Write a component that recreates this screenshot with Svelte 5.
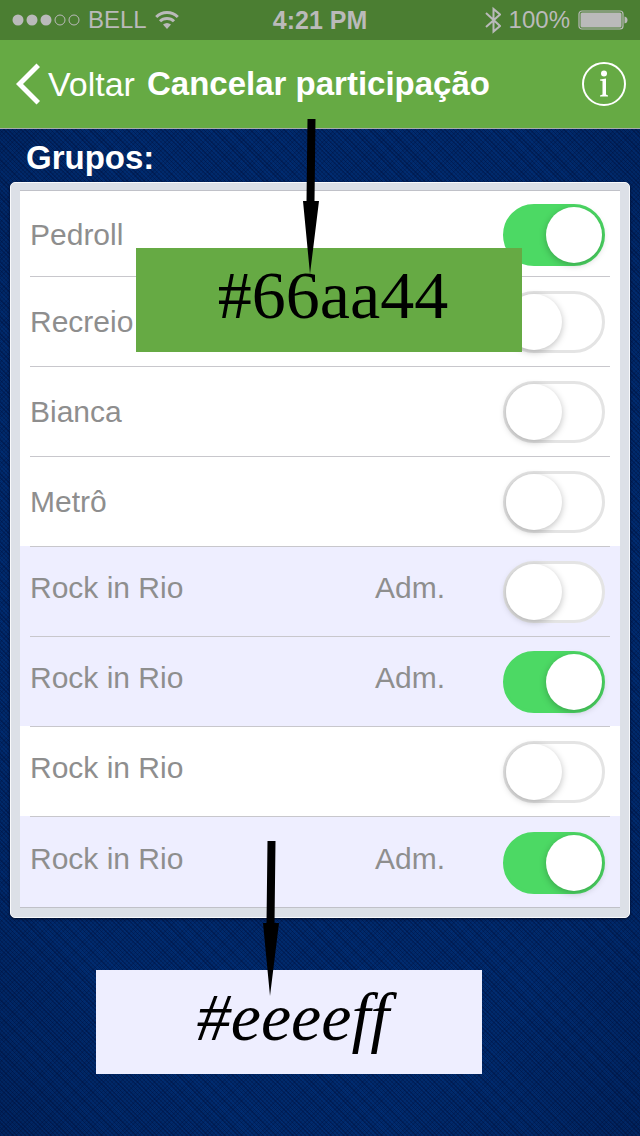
<script>
  let groups = $state([
    { name: 'Pedroll', admin: false, active: true },
    { name: 'Recreio', admin: false, active: false },
    { name: 'Bianca', admin: false, active: false },
    { name: 'Metrô', admin: false, active: false },
    { name: 'Rock in Rio', admin: true, active: false },
    { name: 'Rock in Rio', admin: true, active: true },
    { name: 'Rock in Rio', admin: false, active: false },
    { name: 'Rock in Rio', admin: true, active: true }
  ]);
</script>

{#snippet arrow()}
  <svg class="arrow" viewBox="0 0 18 156" width="18" height="156" aria-hidden="true">
    <path d="M5.500 0H13.500L12.500 82H17L8 155L1 82H4.500Z" fill="#000" />
  </svg>
{/snippet}

<div class="screen">
  <div class="status">
    <div class="side">
      <svg width="68" height="12" viewBox="0 0 68 12" aria-hidden="true">
        <g fill="#bababa">
          <circle cx="6" cy="6" r="5.5" /><circle cx="20" cy="6" r="5.5" /><circle cx="34" cy="6" r="5.5" />
        </g>
        <g fill="none" stroke="#bababa"><circle cx="48" cy="6" r="5" /><circle cx="62" cy="6" r="5" /></g>
      </svg>
      <span>BELL</span>
      <svg width="24" height="18" viewBox="0 0 24 18" aria-hidden="true">
        <path d="M1.200 6A15.500 15.500 0 0 1 22.800 6M5 10.300A10 10 0 0 1 19 10.300" fill="none" stroke="#bababa" stroke-width="3" />
        <path d="M8 13.500Q12 10.500 16 13.500L12 18Z" fill="#bababa" />
      </svg>
    </div>
    <time>4:21 PM</time>
    <div class="side end">
      <svg width="16" height="28" viewBox="0 0 16 28" aria-hidden="true">
        <path d="M1 7L15 20L8.500 25.500V3L15 8.500L1 21" fill="none" stroke="#bababa" stroke-width="2" />
      </svg>
      <span>100%</span>
      <svg width="50" height="20" viewBox="0 0 50 20" aria-hidden="true">
        <rect x="1" y="1" width="44" height="18" rx="3" fill="none" stroke="#bababa" stroke-width="1.2" />
        <rect x="2.500" y="2.500" width="41" height="15" rx="1.500" fill="#bababa" />
        <path d="M46.500 6.500Q49.500 7 49.500 10T46.500 13.500Z" fill="#bababa" />
      </svg>
    </div>
  </div>

  <header>
    <button class="back" type="button">
      <svg width="26" height="42" viewBox="0 0 26 42" aria-hidden="true">
        <path d="M22.500 0.500L26 4L9 21L26 38L22.500 41.500L2 21Z" fill="#fff" />
      </svg>
      Voltar
    </button>
    <h1>Cancelar participação</h1>
    <button class="info" type="button" aria-label="Info">
      <svg width="44" height="44" viewBox="0 0 44 44" aria-hidden="true">
        <circle cx="22" cy="22" r="21" fill="none" stroke="#fff" stroke-width="2" />
        <circle cx="22" cy="11.500" r="3" fill="#fff" />
        <path d="M18 17.500L24 16.500V32.500L26 33.500V34.500H18V33.500L20.500 32.500V19L18 18.500Z" fill="#fff" />
      </svg>
    </button>
  </header>

  <main>
    <h2>Grupos:</h2>
    <div class="panel">
      <ul>
        {#each groups as group, i}
          <li class:admin={group.admin}>
            <label for="group-{i}">{group.name}</label>
            {#if group.admin}<span class="role">Adm.</span>{/if}
            <input id="group-{i}" type="checkbox" role="switch" bind:checked={group.active} />
          </li>
        {/each}
      </ul>
    </div>
  </main>

  <div class="note green">{@render arrow()}#66aa44</div>
  <div class="note lilac">{@render arrow()}#eeeeff</div>
</div>

<style>
  :global(body) {
    margin: 0;
    background-color: #002660;
  }
  .screen {
    position: relative;
    min-height: 100vh;
    box-sizing: border-box;
    padding-bottom: 24px;
    font-family: "Liberation Sans", Arial, sans-serif;
    background:
      radial-gradient(ellipse at center, transparent 70%, rgba(0, 0, 20, 0.15) 100%),
      repeating-linear-gradient(45deg, rgba(0, 10, 50, 0.35) 0 1px, transparent 1px 3px),
      repeating-linear-gradient(45deg, rgba(0, 60, 150, 0.12) 0 3px, transparent 3px 11px),
      repeating-linear-gradient(-45deg, rgba(0, 5, 40, 0.18) 0 1px, transparent 1px 3px),
      #002a6c;
  }
  .status {
    display: grid;
    grid-template-columns: 1fr auto 1fr;
    align-items: center;
    height: 40px;
    padding: 0 12px;
    background: #4b7e32;
    color: #bababa;
    font-size: 24px;
  }
  .side {
    display: flex;
    align-items: center;
    gap: 8px;
  }
  .end {
    justify-content: flex-end;
  }
  time {
    font-size: 25px;
    font-weight: bold;
  }
  header {
    display: flex;
    align-items: center;
    height: 88px;
    padding: 0 14px;
    border-bottom: 1px solid #aaa;
    background: #66aa44;
    color: #fff;
  }
  button {
    border: 0;
    padding: 0;
    background: none;
    color: inherit;
    font: inherit;
  }
  .back {
    display: flex;
    align-items: center;
    gap: 8px;
    font-size: 34px;
  }
  .info {
    display: flex;
    margin-left: auto;
  }
  h1, h2 {
    margin: 0;
    font-size: 33px;
    line-height: 40px;
  }
  h1 {
    margin-left: 12px;
  }
  main {
    padding: 9px 10px 0;
  }
  h2 {
    padding: 0 16px 4px;
    color: #fff;
  }
  .panel {
    padding: 7px 9px 9px;
    border: 1px solid #f8f9fb;
    border-radius: 5px;
    background: #dce0e7;
    box-shadow: 0 1px 3px #000b25;
  }
  ul {
    margin: 0;
    padding: 0;
    list-style: none;
    border-top: 1px solid #c0c1c8;
    border-bottom: 1px solid #c0c1c8;
    background: #fff;
  }
  li {
    display: flex;
    align-items: center;
    box-sizing: border-box;
    height: 90px;
    padding: 2px 15px 0 10px;
    color: #8e8e8e;
    font-size: 30px;
    background: linear-gradient(#c8c7cc, #c8c7cc) 10px 0 / calc(100% - 20px) 1px no-repeat;
  }
  li:first-child {
    height: 85px;
    background: none;
  }
  li:last-child {
    height: 91px;
  }
  li:nth-child(n + 5) label,
  li:nth-child(n + 5) .role {
    padding-bottom: 8px;
  }
  .admin {
    background-color: #eeeeff;
  }
  label {
    flex: 1;
  }
  .role {
    width: 128px;
  }
  input {
    appearance: none;
    position: relative;
    flex: none;
    width: 102px;
    height: 62px;
    margin: 0;
    border: 3px solid #e4e4e4;
    border-radius: 31px;
    background: #fff;
  }
  input::before {
    content: "";
    position: absolute;
    top: 0;
    left: 0;
    width: 56px;
    height: 56px;
    border-radius: 50%;
    background: #fff;
    box-shadow: 0 2px 7px rgba(0, 0, 0, 0.25);
  }
  input:checked {
    border-color: #4cd964;
    background: #4cd964;
  }
  input:checked::before {
    left: 40px;
  }
  .note {
    position: absolute;
    width: 386px;
    height: 104px;
    box-sizing: border-box;
    padding-left: 8px;
    color: #000;
    font: italic 68px/94px "Gabriola", "Liberation Serif", serif;
    text-align: center;
  }
  .green {
    top: 248px;
    left: 136px;
    background: #66aa44;
    font-style: normal;
  }
  .lilac {
    top: 970px;
    left: 96px;
    background: #eeeeff;
  }
  .arrow {
    position: absolute;
    bottom: 77px;
    left: 166px;
  }
</style>
